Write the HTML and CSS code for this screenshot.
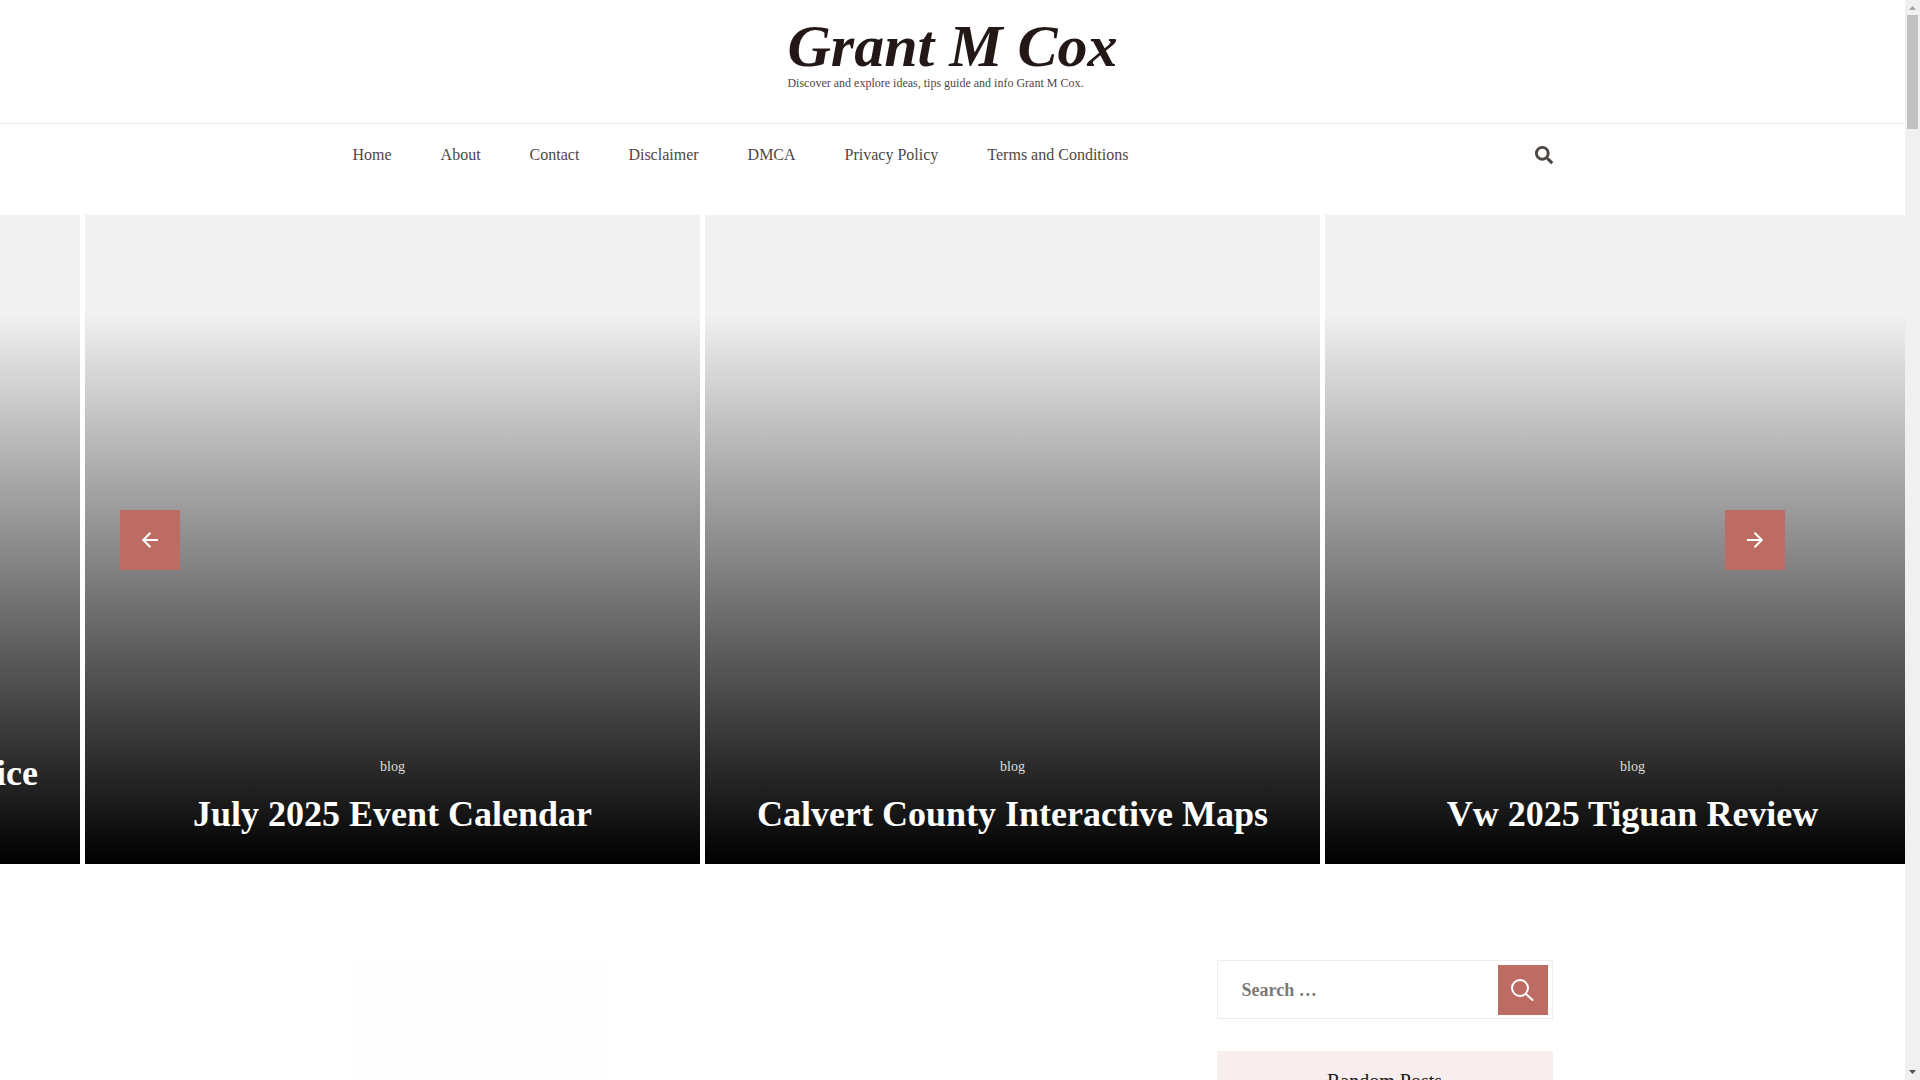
FILE: index.html
```html
<!DOCTYPE html>
<html lang="en">
<head>
    <meta charset="UTF-8">
    <meta name="viewport" content="width=device-width, initial-scale=1.0">
    <title>Grant M Cox</title>
    <link rel="stylesheet" href="styles.css">
</head>
<body>
    <div class="page">
        <header class="site-header">
            <div class="site-branding">
                <div>
                    <h1 class="site-title"><a href="#">Grant M Cox</a></h1>
                    <p class="site-description">Discover and explore ideas, tips guide and info Grant M Cox.</p>
                </div>
            </div>
            <div class="header-nav">
                <div class="container nav-row">
                    <nav class="main-nav">
                        <a href="#">Home</a>
                        <a href="#">About</a>
                        <a href="#">Contact</a>
                        <a href="#">Disclaimer</a>
                        <a href="#">DMCA</a>
                        <a href="#">Privacy Policy</a>
                        <a href="#">Terms and Conditions</a>
                    </nav>
                    <button type="button" class="search-toggle" aria-label="Search">
                        <svg width="18" height="18" viewBox="0 0 512 512"><path fill="currentColor" d="M505 442.700L405.300 343c-4.500-4.500-10.600-7-17-7H372c27.600-35.300 44-79.700 44-128C416 93.100 322.900 0 208 0S0 93.100 0 208s93.100 208 208 208c48.300 0 92.700-16.400 128-44v16.300c0 6.400 2.500 12.500 7 17l99.700 99.700c9.400 9.400 24.600 9.400 33.900 0l28.300-28.300c9.400-9.400 9.400-24.600.1-34zM208 336c-70.700 0-128-57.200-128-128 0-70.700 57.200-128 128-128 70.700 0 128 57.200 128 128 0 70.700-57.200 128-128 128z"/></svg>
                    </button>
                </div>
            </div>
        </header>

        <section class="banner">
            <div class="banner-track">
                <article class="slide">
                    <a class="slide-cat" href="#">blog</a>
                    <h2 class="slide-title"><a href="#">2025 Ford Edge Release And Price Specs</a></h2>
                </article>
                <article class="slide">
                    <a class="slide-cat" href="#">blog</a>
                    <h2 class="slide-title"><a href="#">July 2025 Event Calendar</a></h2>
                </article>
                <article class="slide">
                    <a class="slide-cat" href="#">blog</a>
                    <h2 class="slide-title"><a href="#">Calvert County Interactive Maps</a></h2>
                </article>
                <article class="slide">
                    <a class="slide-cat" href="#">blog</a>
                    <h2 class="slide-title"><a href="#">Vw 2025 Tiguan Review</a></h2>
                </article>
            </div>
            <button type="button" class="banner-btn prev" aria-label="Previous">
                <svg width="16" height="16" viewBox="0 0 16 16"><path d="M16 8H1.500M8.500 .700L1.200 8l7.300 7.300" fill="none" stroke="currentColor" stroke-width="2"/></svg>
            </button>
            <button type="button" class="banner-btn next" aria-label="Next">
                <svg width="16" height="16" viewBox="0 0 16 16"><path d="M0 8h14.500M7.500 .700L14.800 8l-7.300 7.300" fill="none" stroke="currentColor" stroke-width="2"/></svg>
            </button>
        </section>

        <div class="container content">
            <main class="posts">
                <div class="post-thumb"></div>
            </main>
            <aside class="sidebar">
                <form class="search-form">
                    <input type="search" placeholder="Search …" aria-label="Search for">
                    <button type="submit" aria-label="Search">
                        <svg width="24" height="24" viewBox="0 0 24 24"><g fill="none" stroke="currentColor" stroke-width="2" stroke-linecap="round"><circle cx="9" cy="10" r="8"/><path d="M15 16l6.500 6"/></g></svg>
                    </button>
                </form>
                <section class="widget">
                    <h2 class="widget-title">Random Posts</h2>
                </section>
            </aside>
        </div>
    </div>

    <div class="scrollbar" aria-hidden="true">
        <svg width="15" height="15" viewBox="0 0 15 15"><path d="M7.500 6L11 10H4z" fill="#a3a3a3"/></svg>
        <div class="scrollbar-thumb"></div>
        <svg width="15" height="15" viewBox="0 0 15 15"><path d="M4 5h7L7.500 9z" fill="#505050"/></svg>
    </div>
</body>
</html>
```

FILE: styles.css
```css
* {
    box-sizing: border-box;
}

body {
    display: flex;
    height: 100vh;
    margin: 0;
    overflow: hidden;
    background-color: #fff;
    color: #231815;
    font-family: "Liberation Serif", "Times New Roman", serif;
}

a {
    color: inherit;
    text-decoration: none;
}

h1, h2, p {
    margin: 0;
}

button {
    display: flex;
    align-items: center;
    justify-content: center;
    padding: 0;
    border: none;
    cursor: pointer;
}

.page {
    flex: 1;
    min-width: 0;
    overflow: hidden;
}

.container {
    max-width: 1200px;
    margin: 0 auto;
}

/* Header */
.site-branding {
    display: flex;
    justify-content: center;
    padding: 10px 0 30px;
    border-bottom: 1px solid #ebebeb;
}

.site-title {
    font-size: 60px;
    font-style: italic;
    line-height: 72px;
    margin-bottom: -8px;
}

.site-description {
    font-size: 12px;
    line-height: 19px;
    color: #4f4644;
}

.nav-row {
    display: flex;
    align-items: center;
    justify-content: space-between;
    height: 61px;
}

.header-nav {
    padding-bottom: 30px;
}

.main-nav {
    display: flex;
    gap: 49px;
    font-size: 16px;
    color: #4f4644;
}

.search-toggle {
    background: none;
    color: #4f4644;
}

/* Banner slider */
.banner {
    position: relative;
    overflow: hidden;
}

.banner-track {
    display: flex;
    gap: 5px;
    margin-left: -535px;
}

.slide {
    display: flex;
    flex: none;
    flex-direction: column;
    align-items: center;
    justify-content: flex-end;
    width: 615px;
    height: 649px;
    padding: 29px 30px;
    background: linear-gradient(rgba(0, 0, 0, 0) 15%, #000) #f1f1f1;
    color: #fff;
    text-align: center;
}

.slide-cat {
    margin-bottom: 16px;
    font-size: 14px;
    line-height: 22px;
    color: rgba(255, 255, 255, 0.85);
}

.slide-title {
    font-size: 36px;
    line-height: 41px;
}

.banner-btn {
    position: absolute;
    top: 50%;
    width: 60px;
    height: 60px;
    margin-top: -30px;
    background-color: #bd6c64;
    color: #fff;
}

.prev {
    left: 120px;
}

.next {
    right: 120px;
}

/* Content */
.content {
    display: flex;
    justify-content: space-between;
    padding-top: 96px;
}

.post-thumb {
    width: 253px;
    height: 250px;
    background-color: #fefefe;
}

.sidebar {
    width: 336px;
}

.search-form {
    display: flex;
    align-items: center;
    margin-bottom: 32px;
    padding: 4px 4px 3px;
    border: 1px solid #ededed;
}

.search-form input {
    flex: 1;
    min-width: 0;
    height: 48px;
    padding: 0 20px;
    border: none;
    outline: none;
    background: none;
    font-family: inherit;
    font-size: 18px;
    font-weight: bold;
}

.search-form input::placeholder {
    color: #7a7a7a;
}

.search-form button {
    width: 50px;
    height: 50px;
    background-color: #bd6c64;
    color: #fff;
}

.widget-title {
    padding: 15px;
    background-color: #f8eeed;
    font-size: 20px;
    font-weight: normal;
    line-height: 30px;
    text-align: center;
}

/* Scrollbar column */
.scrollbar {
    display: flex;
    flex-direction: column;
    width: 15px;
    background-color: #f0f0f0;
}

.scrollbar-thumb {
    height: 114px;
    margin: 0 2px auto;
    background-color: #c1c1c1;
}
```
